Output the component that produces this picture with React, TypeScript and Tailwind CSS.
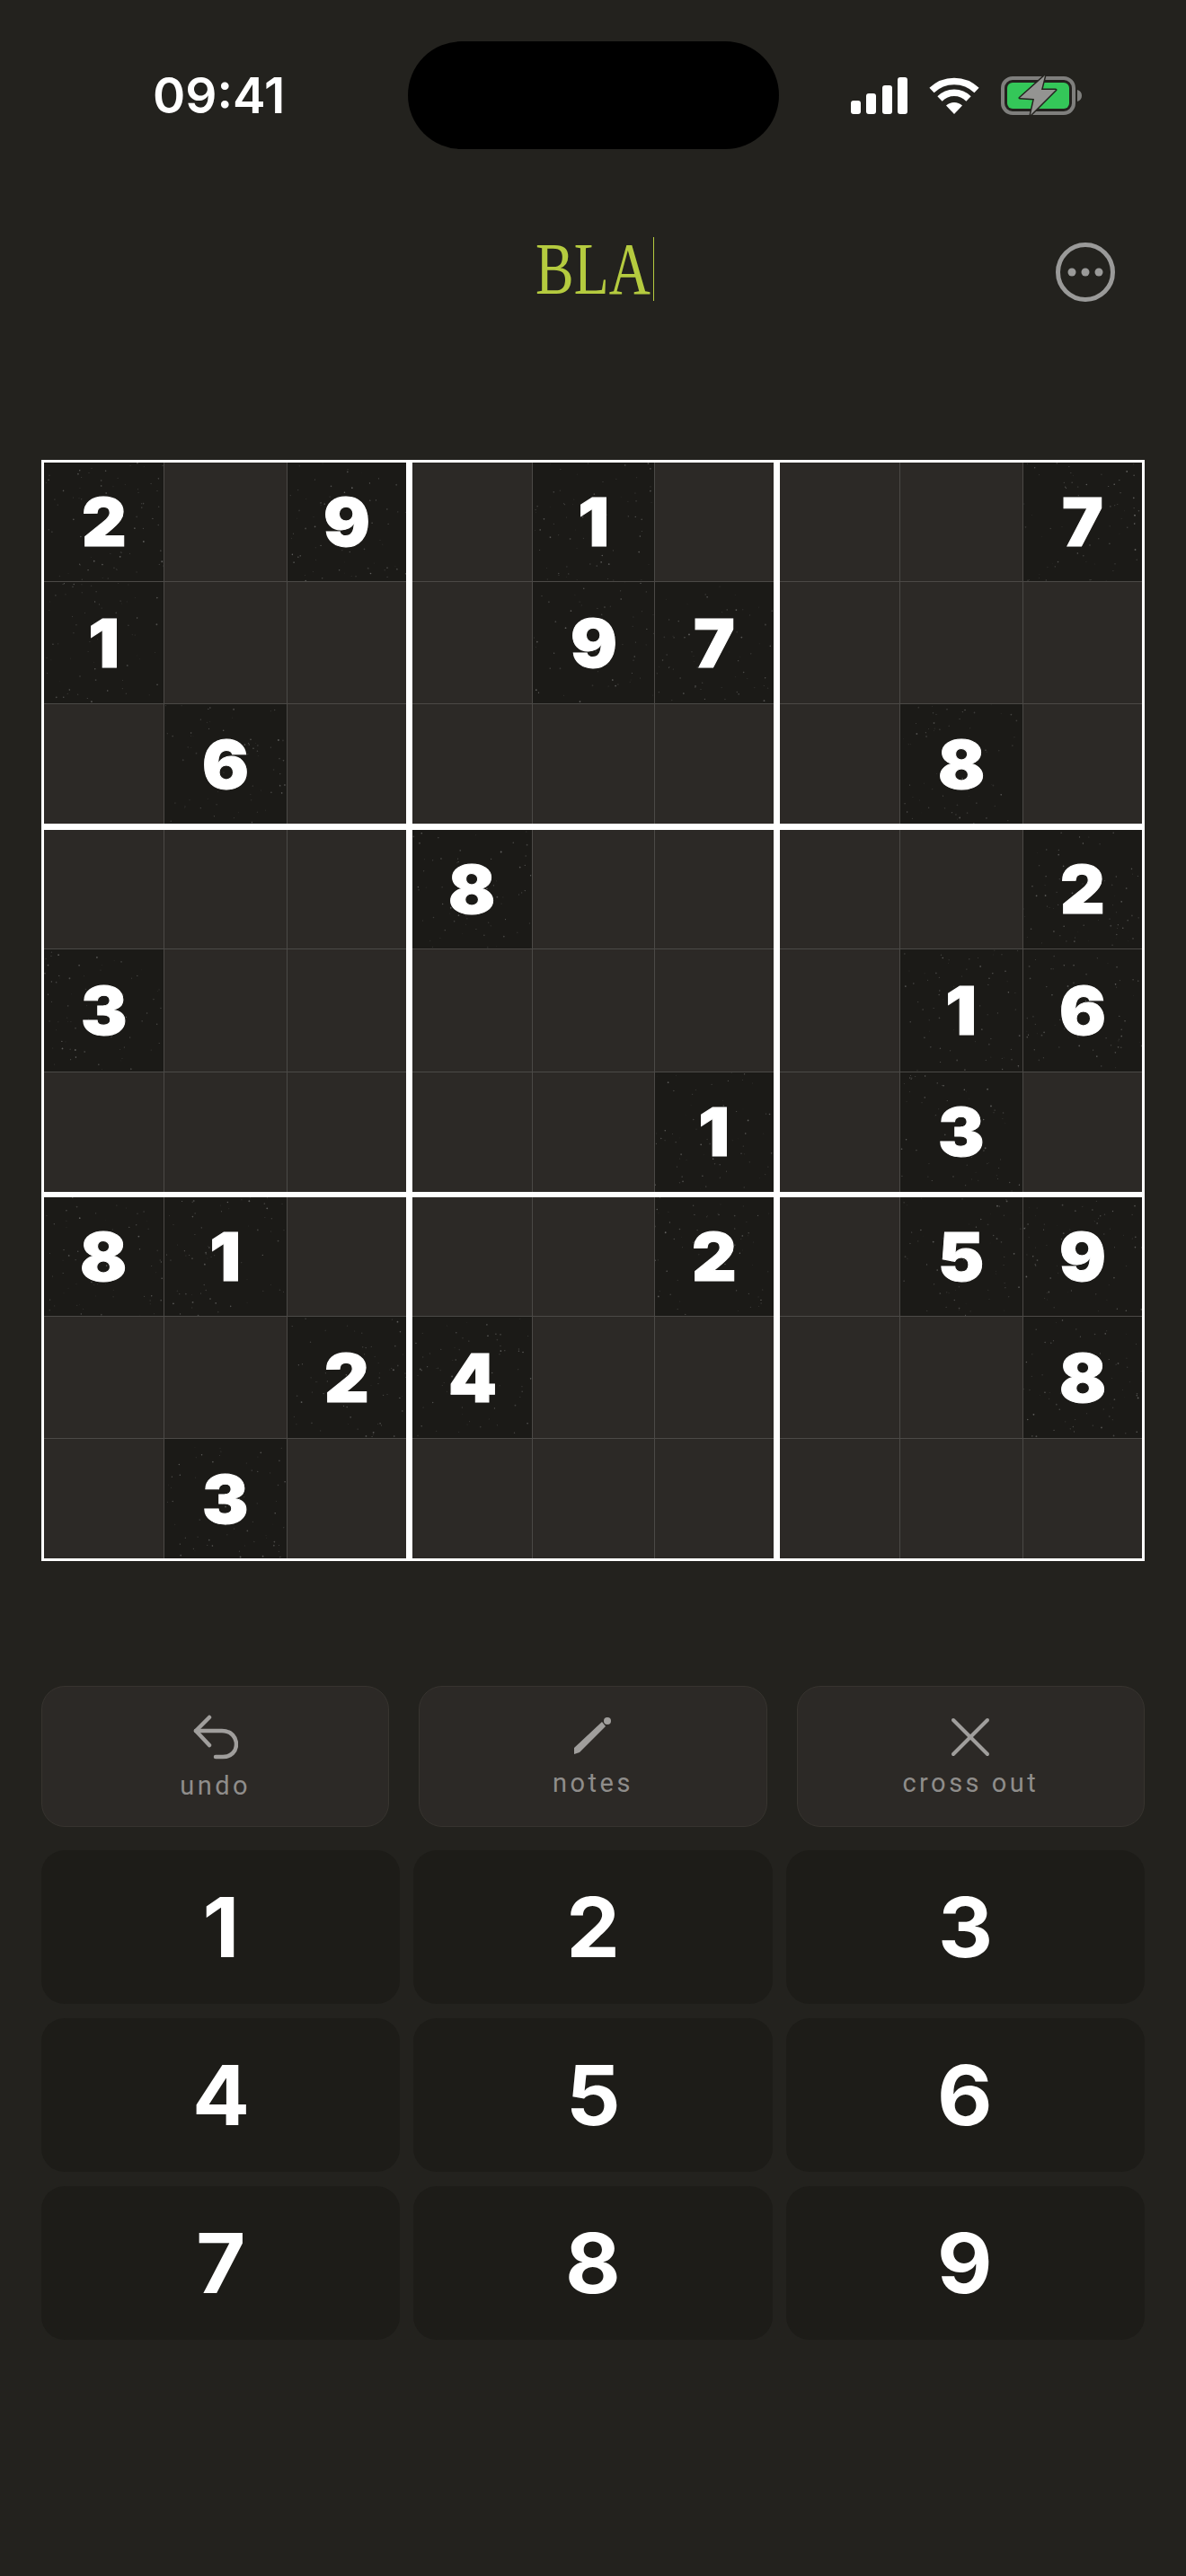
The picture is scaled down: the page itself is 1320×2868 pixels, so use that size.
const BOARD = [
  "209010007",
  "100097000",
  "060000080",
  "000800002",
  "300000016",
  "000001030",
  "810002059",
  "002400008",
  "030000000",
];

// deterministic grain for the given cells
function Speckle({ seed }: { seed: number }) {
  let s = seed * 7919 + 13;
  const next = () => {
    s = (s * 16807) % 2147483647;
    return (s % 10000) / 10000;
  };
  const dots = Array.from({ length: 70 }, () => ({
    x: next() * 134,
    y: next() * 134,
    r: 0.35 + next() * 0.6,
    o: 0.08 + next() * 0.24,
  }));
  return (
    <svg viewBox="0 0 134 134" className="absolute inset-0 w-full h-full">
      {dots.map((d, i) => (
        <circle key={i} cx={d.x} cy={d.y} r={d.r} fill="#ffffff" opacity={d.o} />
      ))}
    </svg>
  );
}

function Cell({ value, seed }: { value: string; seed: number }) {
  if (value === "0") return <div className="bg-[#2c2926]" />;
  return (
    <div className="relative flex items-center justify-center bg-[#1b1a17]">
      <Speckle seed={seed} />
      <span className="relative scale-x-[1.04] text-white font-['Inter',sans-serif] font-black text-[74px] leading-none [-webkit-text-stroke:1px_white]">
        {value}
      </span>
    </div>
  );
}

function Block({ row, col }: { row: number; col: number }) {
  const cells = [];
  for (let r = 0; r < 3; r++) {
    for (let c = 0; c < 3; c++) {
      const y = row * 3 + r;
      const x = col * 3 + c;
      cells.push(<Cell key={`${r}-${c}`} value={BOARD[y][x]} seed={y * 9 + x + 1} />);
    }
  }
  return (
    <div className="grid grid-cols-[133px_1fr_132px] grid-rows-[132px_1fr_133px] gap-px bg-[#4b4946]">
      {cells}
    </div>
  );
}

function StatusIcons() {
  return (
    <div className="flex items-center">
      <svg width="63" height="41" viewBox="0 0 63 41" fill="#ffffff">
        <rect x="0" y="26" width="11" height="15" rx="3" />
        <rect x="17" y="18" width="11" height="23" rx="3" />
        <rect x="35" y="9" width="11" height="32" rx="3" />
        <rect x="52" y="0" width="11" height="41" rx="3" />
      </svg>
      <svg width="56" height="41" viewBox="0 0 56 41" className="ml-[24px]" fill="none">
        <path d="M3 14.5 A36 36 0 0 1 53 14.5" stroke="#ffffff" strokeWidth="7.5" />
        <path d="M12 24 A22.5 22.5 0 0 1 44 24" stroke="#ffffff" strokeWidth="7.5" />
        <path d="M28 41 L19 31.5 A13 13 0 0 1 37 31.5 Z" fill="#ffffff" />
      </svg>
      <svg width="91" height="46" viewBox="0 0 91 46" className="ml-[24px]" fill="none">
        <rect x="2" y="4" width="79" height="39" rx="11" stroke="#7f7f7d" strokeWidth="4" />
        <rect x="7" y="9" width="69" height="29" rx="6" fill="#34c759" />
        <path d="M85 17 C88.5 18 90 20.5 90 23.5 C90 26.5 88.5 29 85 30 Z" fill="#7f7f7d" />
        <polygon
          points="49,1 21,26 37,27 33,45 61,17 45,17"
          fill="#949492"
          stroke="#23221e"
          strokeWidth="3"
          strokeLinejoin="round"
          paintOrder="stroke"
        />
      </svg>
    </div>
  );
}

function MoreIcon() {
  return (
    <svg width="66" height="66" viewBox="0 0 66 66" fill="none">
      <circle cx="33" cy="33" r="30.5" stroke="#9a9a99" strokeWidth="5" />
      <circle cx="18" cy="33" r="4.5" fill="#9a9a99" />
      <circle cx="33" cy="33" r="4.5" fill="#9a9a99" />
      <circle cx="48" cy="33" r="4.5" fill="#9a9a99" />
    </svg>
  );
}

function UndoIcon() {
  return (
    <svg width="50" height="50" viewBox="0 0 50 50" fill="none" stroke="#a09e9c" strokeWidth="4.5" strokeLinecap="round" strokeLinejoin="round">
      <path d="M18 3 L3 18 L18 34" />
      <path d="M3 18 H32 C43 18 48 26 48 33 C48 41 42 47 33 47 H25" />
    </svg>
  );
}

function PenIcon() {
  return (
    <svg width="50" height="50" viewBox="0 0 50 50" fill="#a09e9c">
      <polygon points="35,8 39,13 10,42 4,44 4,37" />
      <circle cx="41" cy="7" r="4" />
    </svg>
  );
}

function CrossIcon() {
  return (
    <svg width="50" height="50" viewBox="0 0 50 50" fill="none" stroke="#a09e9c" strokeWidth="4" strokeLinecap="round">
      <path d="M6 6 L44 44" />
      <path d="M44 6 L6 44" />
    </svg>
  );
}

function ActionButton({ icon, label, labelClass }: { icon: React.ReactNode; label: string; labelClass: string }) {
  return (
    <button className="h-[157px] flex flex-col items-center rounded-[26px] bg-[#2c2926] border border-[#37342f]">
      <div className="mt-[31px]">{icon}</div>
      <span className={`font-['Roboto',sans-serif] text-[#8f8d8b] text-[29px] leading-none tracking-[3.5px] ${labelClass}`}>
        {label}
      </span>
    </button>
  );
}

export default function App() {
  return (
    <div className="w-[1320px] h-[2868px] bg-[#23221e] overflow-hidden">
      {/* status bar */}
      <div className="flex items-center pt-[46px]">
        <div className="w-[454px] pl-[170px]">
          <span className="text-white font-['Inter',sans-serif] font-semibold text-[55px] leading-none">09:41</span>
        </div>
        <div className="w-[413px] h-[120px] rounded-[60px] bg-black" />
        <div className="pl-[80px]">
          <StatusIcons />
        </div>
      </div>

      {/* title row */}
      <div className="mt-[96px] h-[72px] grid grid-cols-[1fr_auto_1fr] items-center">
        <div />
        <div className="flex w-[135px] h-[72px] items-end">
          <span className="w-[131px] ml-[3px] origin-left scale-x-[0.77] text-[#b5cb3f] font-['Liberation_Serif',serif] text-[83px] leading-[72px] whitespace-nowrap">
            BLA
          </span>
          <div className="w-px h-[71px] shrink-0 bg-[#b5cb3f]" />
        </div>
        <div className="flex justify-end pr-[79px] pt-[8px]">
          <MoreIcon />
        </div>
      </div>

      {/* board */}
      <div className="mt-[178px] mx-[46px] w-[1228px] border-[3px] border-white bg-white grid grid-cols-[403px_402px_403px] grid-rows-[402px_403px_402px] gap-x-[7px] gap-y-[6.5px]">
        {[0, 1, 2].map((r) => [0, 1, 2].map((c) => <Block key={`${r}${c}`} row={r} col={c} />))}
      </div>

      {/* actions */}
      <div className="mt-[139px] mx-[46px] grid grid-cols-3 gap-x-[33px]">
        <ActionButton icon={<UndoIcon />} label="undo" labelClass="mt-[15px]" />
        <ActionButton icon={<PenIcon />} label="notes" labelClass="mt-[12px]" />
        <ActionButton icon={<CrossIcon />} label="cross out" labelClass="mt-[12px]" />
      </div>

      {/* number pad */}
      <div className="mt-[26px] mx-[46px] grid grid-cols-3 gap-x-[15px] gap-y-[16px]">
        {[1, 2, 3, 4, 5, 6, 7, 8, 9].map((n) => (
          <button
            key={n}
            className="h-[171px] flex items-center justify-center rounded-[26px] bg-[#1d1c18] text-white font-['Inter',sans-serif] font-bold text-[92px] leading-none"
          >
            <span className="scale-x-[1.03]">{n}</span>
          </button>
        ))}
      </div>
    </div>
  );
}
